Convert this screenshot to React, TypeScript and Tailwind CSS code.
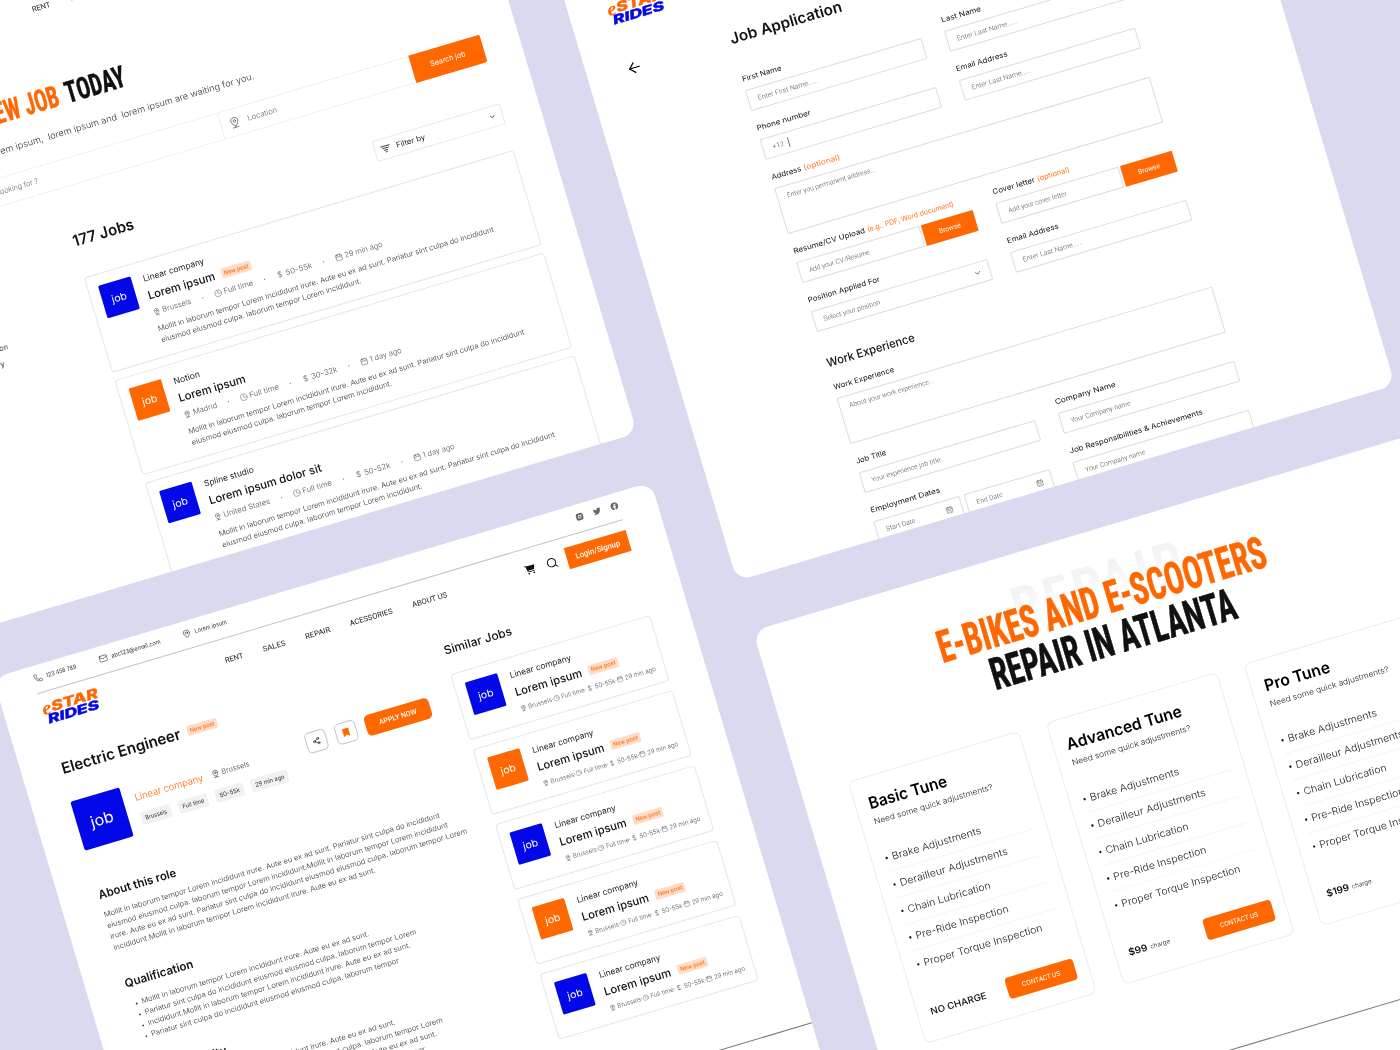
import React, { useLayoutEffect, useRef } from "react";
import { Phone, Mail, MapPin, Search, Share2, Clock, ChevronDown, ArrowLeft, CalendarDays, Calendar } from "lucide-react";
import { FaTwitter, FaFacebook, FaBookmark } from "react-icons/fa";
import { FaCartShopping } from "react-icons/fa6";
import { RiInstagramFill } from "react-icons/ri";

/** A single line of text stretched to an exact width. */
function Fit({ w, className = "", outer = "", children }: { w: number; className?: string; outer?: string; children: React.ReactNode }) {
  const ref = useRef<HTMLSpanElement>(null);
  useLayoutEffect(() => {
    const el = ref.current;
    if (!el) return;
    const natural = parseFloat(getComputedStyle(el).width);
    if (natural > 0) el.style.transform = `scaleX(${w / natural})`;
  }, [w]);
  return (
    <span className={`flex shrink-0 ${outer}`} style={{ width: w }}>
      <span ref={ref} className={`shrink-0 origin-left whitespace-pre ${className}`}>
        {children}
      </span>
    </span>
  );
}

function PinIcon({ className }: { className: string }) {
  return (
    <svg viewBox="0 0 24 24" fill="none" stroke="currentColor" strokeWidth="1.6" strokeLinecap="round" strokeLinejoin="round" className={className}>
      <path d="M12 20c-2.5-2-7-5.8-7-10.5a7 7 0 0 1 14 0C19 14.200 14.500 18 12 20z" />
      <circle cx="12" cy="9.500" r="2.600" />
      <path d="M6 22.500h12" />
    </svg>
  );
}

function FilterIcon({ className }: { className: string }) {
  return (
    <svg viewBox="0 0 24 24" fill="none" stroke="currentColor" strokeWidth="2" strokeLinecap="round" className={className}>
      <path d="M1.500 5.500h21M5 10.500h14M8 15.500h8M10.500 20h3" />
    </svg>
  );
}

function Logo() {
  return (
    <div className="w-[58px] shrink-0 font-['Inter'] font-extrabold italic">
      <div className="flex h-[11.500px] items-center text-[#ff6700]">
        <Fit w={9.500} className="font-['Liberation_Serif'] text-[19px] font-bold leading-[11px]">e</Fit>
        <Fit w={48.500} className="text-[13.800px] leading-[11.500px] [-webkit-text-stroke:0.350px_#ff6700]">STAR</Fit>
      </div>
      <div className="ml-[3px] mt-[0.300px] h-[11px] text-[#0308e8]">
        <Fit w={53} className="text-[12.600px] leading-[11px] [-webkit-text-stroke:0.400px_#0308e8]">RIDES</Fit>
      </div>
    </div>
  );
}

const NAV: [string, number][] = [
  ["RENT", 19],
  ["SALES", 23.5],
  ["REPAIR", 26],
  ["ACESSORIES", 44.5],
  ["ABOUT US", 36.5],
];

function Header() {
  return (
    <header className="px-[38px] text-[#333]">
      <div className="flex h-[28.300px] items-center border-b border-[#c4c4c4] pb-[2px] font-['Inter'] text-[6.200px]">
        <Phone className="ml-[0.800px] mr-[4px] size-[9px]" strokeWidth={1.5} />
        <Fit w={31}>123 456 789</Fit>
        <Mail className="ml-[24px] mr-[4px] size-[9px]" strokeWidth={1.5} />
        <Fit w={51}>abc123@email.com</Fit>
        <MapPin className="ml-[23px] mr-[4px] size-[9px]" strokeWidth={1.5} />
        <Fit w={33}>Lorem ipsum</Fit>
        <div className="ml-auto flex gap-[10px] text-[#666]">
          <RiInstagramFill className="size-[8.500px]" />
          <FaTwitter className="size-[8px]" />
          <FaFacebook className="size-[8px]" />
        </div>
      </div>
      <div className="mt-[10px] flex h-[22px] items-center">
        <Logo />
        <nav className="ml-[131.200px] flex gap-[20.600px] font-['Roboto'] text-[7.500px] text-[#222]">
          {NAV.map(([label, w]) => (
            <Fit key={label} w={w}>{label}</Fit>
          ))}
        </nav>
        <div className="ml-auto flex items-center text-[#111]">
          <FaCartShopping className="mr-[11.500px] size-[10.500px]" />
          <Search className="mr-[9px] size-[12.500px]" strokeWidth={2} />
          <div className="flex h-[21.800px] w-[64.500px] items-center justify-center bg-[#ff6700] font-['Roboto'] text-[8px] font-medium text-white">
            <Fit w={46}>Login/Signup</Fit>
          </div>
        </div>
      </div>
    </header>
  );
}

function Badge() {
  return (
    <div className="flex h-[10px] w-[31px] shrink-0 items-center justify-center rounded-[1.500px] bg-[#ffdcc8] font-['Roboto'] text-[6.200px] font-medium leading-none text-[#ff7a20]">
      <Fit w={25.500}>New post</Fit>
    </div>
  );
}

type Meta = { place: [string, number]; salary: [string, number]; time: [string, number]; type: [string, number] };

function MetaRow({ meta, compact }: { meta: Meta; compact?: boolean }) {
  const icon = compact ? "size-[6.500px] shrink-0" : "size-[7.800px] shrink-0";
  const dot = (
    <span className={compact ? "ml-[0.400px] mr-[0.600px] size-[0.900px] shrink-0 rounded-full bg-[#777]" : "mx-[11.500px] size-[1.200px] shrink-0 rounded-full bg-[#777]"} />
  );
  const gap = compact ? "flex items-center gap-[1.700px]" : "flex items-center gap-[2px]";
  return (
    <div className={`flex h-[10px] items-center font-['Inter'] font-light text-[#555] ${compact ? "text-[6.500px]" : "text-[7.600px]"}`}>
      <div className={gap}><PinIcon className={icon} /><Fit w={meta.place[1]}>{meta.place[0]}</Fit></div>
      {dot}
      <div className={gap}><Clock className={icon} strokeWidth={1.5} /><Fit w={meta.type[1]}>{meta.type[0]}</Fit></div>
      {dot}
      <div className={gap}><span className={compact ? "w-[7.500px] text-center" : "w-[7.800px] text-center"}>$</span><Fit w={meta.salary[1]}>{meta.salary[0]}</Fit></div>
      {dot}
      <div className={gap}><Calendar className={icon} strokeWidth={1.500} /><Fit w={meta.time[1]}>{meta.time[0]}</Fit></div>
    </div>
  );
}

function JobTile({ orange }: { orange?: boolean }) {
  return (
    <div className={`flex size-[33.800px] shrink-0 items-center justify-center rounded-[1.500px] font-['Inter'] text-[10.200px] text-white ${orange ? "bg-[#ff6700]" : "bg-[#0308e8]"}`}>
      <Fit w={15.500}>job</Fit>
    </div>
  );
}

function JobHead({ company, title, badge }: { company: [string, number]; title: [string, number]; badge?: boolean }) {
  return (
    <>
      <div className="h-[12px] font-['Inter'] text-[8.500px] leading-[12px] text-[#222]">
        <Fit w={company[1]}>{company[0]}</Fit>
      </div>
      <div className="mt-[4.600px] flex h-[14px] items-center gap-[7px] font-['Inter'] text-[11.400px] font-medium leading-[14px] text-[#111]">
        <Fit w={title[1]}>{title[0]}</Fit>
        {badge && <Badge />}
      </div>
    </>
  );
}

const JOBS: { company: [string, number]; title: [string, number]; badge?: boolean; orange?: boolean; meta: Meta }[] = [
  {
    company: ["Linear company", 63.5], title: ["Lorem ipsum", 69.5], badge: true,
    meta: { place: ["Brussels", 30], type: ["Full time", 30.5], salary: ["50-55k", 27.5], time: ["29 min ago", 39.5] },
  },
  {
    company: ["Notion", 27], title: ["Lorem ipsum", 69.5], orange: true,
    meta: { place: ["Madrid", 25], type: ["Full time", 30.5], salary: ["30-32k", 27], time: ["1 day ago", 33] },
  },
  {
    company: ["Spline studio", 51.5], title: ["Lorem ipsum dolor sit", 117],
    meta: { place: ["United States", 48.5], type: ["Full time", 30.5], salary: ["50-52k", 27], time: ["1 day ago", 33] },
  },
];

function JobList() {
  return (
    <>
      <div className="mt-[64px] flex h-[30px] w-[297px] items-center justify-end font-['Roboto'] text-[30px] font-bold leading-[30px] text-[#111] [-webkit-text-stroke-width:0.400px] [font-stretch:75%]">
        <Fit w={100}>FIND YOUR</Fit>
        <Fit w={79.500} outer="ml-[5px]" className="text-[#ff6700]">NEW JOB</Fit>
        <Fit w={61.500} outer="ml-[7.500px]">TODAY</Fit>
      </div>
      <div className="mt-[14.700px] flex h-[14px] w-[421px] items-center justify-end font-['Inter'] text-[9px] font-light leading-[14px] text-[#333]">
        <span className="whitespace-pre">Thousands of jobs, lor</span>
        <Fit w={264.500}>{"em ipsum,  lorem ipsum and  lorem ipsum are waiting for you."}</Fit>
      </div>
      <div className="ml-[38px] mt-[18px] flex h-[28.600px] w-[611px] items-stretch rounded-[2px] border border-r-0 border-[#ececec] font-['Inter'] text-[7.600px] font-light text-[#666]">
        <div className="flex w-[337px] items-center border-r border-[#ececec]">
          <span className="w-[105.800px] whitespace-pre text-right">What are you l</span>
          <Fit w={39.500}>ooking for ?</Fit>
        </div>
        <div className="flex items-center">
          <PinIcon className="ml-[7.500px] mr-[7.500px] size-[12px]" />
          <Fit w={30.500}>Location</Fit>
        </div>
        <div className="-my-px ml-auto flex w-[74.300px] items-center justify-center rounded-r-[2px] bg-[#ff6700] font-normal text-white">
          <Fit w={36.500}>Search job</Fit>
        </div>
      </div>
      <div className="mt-[43px] flex">
        <aside className="w-[200.500px] shrink-0 pl-[38px] pt-[85px] font-['Inter'] text-[7.600px] leading-[15.500px] text-[#333]">
          <div className="w-[70px] text-right">Location</div>
          <div className="w-[62px] text-right">Salary</div>
        </aside>
        <main className="w-[448.200px]">
          <div className="flex h-[21.600px] items-center justify-between">
            <Fit w={63} className="font-['Inter'] text-[15.500px] font-semibold text-[#111]">177 Jobs</Fit>
            <div className="flex h-[21.600px] w-[133.500px] items-center rounded-[2px] border border-[#e9e9e9] text-[#222]">
              <FilterIcon className="ml-[5.500px] size-[10px]" />
              <Fit w={30} outer="ml-[6px]" className="font-['Inter'] text-[7.600px]">Filter by</Fit>
              <ChevronDown className="ml-auto mr-[5.500px] size-[8px]" strokeWidth={1.800} />
            </div>
          </div>
          <div className="mt-[27px] flex flex-col gap-[7.800px]">
            {JOBS.map((job, i) => (
              <article key={i} className="flex h-[99.200px] rounded-[4px] border border-[#e6e6e6] pl-[10.300px] pt-[11px]">
                <JobTile orange={job.orange} />
                <div className="ml-[11.400px]">
                  <JobHead company={job.company} title={job.title} badge={job.badge} />
                  <div className="mt-[5.500px]"><MetaRow meta={job.meta} /></div>
                  <div className="mt-[6.300px] font-['Inter'] text-[7.400px] font-light leading-[11.500px] text-[#333]">
                    <Fit w={350}>Mollit in laborum tempor Lorem incididunt irure. Aute eu ex ad sunt. Pariatur sint culpa do incididunt</Fit>
                    <Fit w={208.500}>eiusmod eiusmod culpa. laborum tempor Lorem incididunt.</Fit>
                  </div>
                </div>
              </article>
            ))}
          </div>
        </main>
      </div>
    </>
  );
}

function Label({ text, w, note, noteW = 0 }: { text: string; w: number; note?: string; noteW?: number }) {
  return (
    <div className="flex h-[10px] items-center gap-[2.500px] pl-[0.500px] font-['Inter'] text-[7.400px] leading-[10px] text-[#111]">
      <Fit w={w}>{text}</Fit>
      {note && <Fit w={noteW} className="text-[#ff7a20]">{note}</Fit>}
    </div>
  );
}

const box = "flex rounded-[1.500px] border border-[#dcdcdc] pl-[9.200px] font-['Roboto'] text-[6.900px] font-light text-[#555]";

function Field(p: { label: string; w: number; note?: string; noteW?: number; hint: string; hintW: number; browse?: boolean; chevron?: boolean; caret?: boolean }) {
  return (
    <div>
      <Label text={p.label} w={p.w} note={p.note} noteW={p.noteW} />
      <div className="mt-[6.600px] flex h-[21.600px] gap-[1.800px]">
        <div className={`${box} flex-1 items-center`}>
          <Fit w={p.hintW}>{p.hint}</Fit>
          {p.caret && <span className="ml-[4.500px] h-[10px] w-[0.700px] bg-[#555]" />}
          {p.chevron && <ChevronDown className="ml-auto mr-[7.500px] size-[9px]" strokeWidth={1.700} />}
        </div>
        {p.browse && (
          <div className="flex w-[54px] items-center justify-center rounded-[1px] bg-[#ff6700] font-['Roboto'] text-[6.900px] text-white">
            <Fit w={22.500}>Browse</Fit>
          </div>
        )}
      </div>
    </div>
  );
}

function Area(p: { label: string; w: number; note?: string; noteW?: number; hint: string; hintW: number }) {
  return (
    <div className="col-span-2">
      <Label text={p.label} w={p.w} note={p.note} noteW={p.noteW} />
      <div className={`${box} mt-[6.600px] h-[47.800px] pt-[4.500px] leading-[10px]`}>
        <Fit w={p.hintW}>{p.hint}</Fit>
      </div>
    </div>
  );
}

function DateBox({ hint, w }: { hint: string; w: number }) {
  return (
    <div className={`${box} w-[89.700px] items-center`}>
      <Fit w={w}>{hint}</Fit>
      <CalendarDays className="ml-auto mr-[8.500px] size-[7.500px]" strokeWidth={1.500} />
    </div>
  );
}

function Application() {
  return (
    <>
      <div className="mt-[37.500px] flex h-[18px] items-center">
        <ArrowLeft className="ml-[39.500px] size-[17px] text-black" strokeWidth={1.700} />
        <Fit w={116} outer="ml-[91.500px]" className="font-['Inter'] text-[15.300px] font-semibold text-[#111]">Job Application</Fit>
      </div>
      <form className="ml-[147.500px] mt-[27.700px] w-[391.700px]">
        <div className="grid grid-cols-2 gap-x-[23.700px] gap-y-[12.900px]">
          <Field label="First Name" w={40.5} hint="Enter First Name......" hintW={62} />
          <Field label="Last Name" w={41} hint="Enter Last Name......" hintW={62} />
          <Field label="Phone number" w={56} hint="+12" hintW={12} caret />
          <Field label="Email Address" w={53.5} hint="Enter Last Name......" hintW={62} />
          <Area label="Address" w={31} note="(optional)" noteW={38} hint="Enter you permanent address..." hintW={91.5} />
          <Field label="Resume/CV Upload" w={74.5} note="(e.g., PDF, Word document)" noteW={90} hint="Add your CV/Resume" hintW={63} browse />
          <Field label="Cover letter" w={44} note="(optional)" noteW={33.7} hint="Add your cover letter" hintW={61} browse />
          <Field label="Position Applied For" w={74.8} hint="Select your position" hintW={58.8} chevron />
          <Field label="Email Address" w={53.5} hint="Enter Last Name......" hintW={62} />
        </div>
        <div className="mt-[24.500px] h-[16px] pl-[0.500px] font-['Inter'] text-[11.800px] font-medium leading-[16px] text-[#111]">
          <Fit w={91.500}>Work Experience</Fit>
        </div>
        <div className="mt-[12px] grid grid-cols-2 gap-x-[23.700px] gap-y-[12.900px]">
          <Area label="Work Experience" w={62.600} hint="About your work experience..." hintW={87.600} />
          <Field label="Job Title" w={31.300} hint="Your experience job title.." hintW={74.800} />
          <Field label="Company Name" w={63} hint="Your Company name" hintW={62.300} />
          <div>
            <Label text="Employment Dates" w={72.300} />
            <div className="mt-[6.600px] flex h-[21.600px] justify-between">
              <DateBox hint="Start Date" w={30} />
              <DateBox hint="End Date" w={27} />
            </div>
          </div>
          <Field label="Job Responsibilities & Achievements" w={138.500} hint="Your Company name" hintW={62.300} />
        </div>
      </form>
    </>
  );
}

const SERVICES: [string, number][] = [
  ["Brake Adjustments", 92.5],
  ["Derailleur Adjustments", 112],
  ["Chain Lubrication", 86],
  ["Pre-Ride Inspection", 96.400],
  ["Proper Torque Inspection", 123.500],
];

const PLANS: { name: [string, number]; price: [string, number]; charge?: boolean }[] = [
  { name: ["Basic Tune", 81], price: ["NO CHARGE", 58] },
  { name: ["Advanced Tune", 119.700], price: ["$99", 19.500], charge: true },
  { name: ["Pro Tune", 67.600], price: ["$199", 23.400], charge: true },
];

function Repair() {
  return (
    <div className="flex h-full flex-col">
      <div className="relative mt-[49px] font-['Roboto'] font-bold [font-stretch:75%]">
        <div className="absolute left-[255px] top-[-20px] text-[60px] leading-[52px] tracking-[5px]">
          <Fit w={181} className="bg-linear-to-b from-[#f3f3f3] from-20% to-white to-75% bg-clip-text text-transparent">REPAIR</Fit>
        </div>
        <div className="relative text-[44.600px] leading-[41.300px] [-webkit-text-stroke-width:0.600px]">
          <div className="pl-[172.500px] text-[#ff6700]"><Fit w={341}>E-BIKES AND E-SCOOTERS</Fit></div>
          <div className="pl-[215.500px] text-[#111]"><Fit w={254.500}>REPAIR IN ATLANTA</Fit></div>
        </div>
      </div>
      <div className="ml-[47.700px] mt-[39.800px] flex gap-[27.800px]">
        {PLANS.map((plan) => (
          <section key={plan.name[0]} className="flex h-[273.500px] w-[178.700px] shrink-0 flex-col rounded-[7px] border border-[#ececec] px-[13px] pt-[16px] font-['Inter']">
            <div className="h-[20px] text-[16.300px] font-semibold leading-[20px] text-black">
              <Fit w={plan.name[1]}>{plan.name[0]}</Fit>
            </div>
            <div className="mt-[3px] h-[12px] text-[8px] font-light leading-[12px] text-[#222]">
              <Fit w={123.500}>Need some quick adjustments?</Fit>
            </div>
            <ul className="mt-[19px]">
              {SERVICES.map(([name, w], i) => (
                <li key={name} className={`flex h-[27.600px] items-center text-[10px] font-light text-[#222] ${i < SERVICES.length - 1 ? "border-b border-[#f5f5f5]" : ""}`}>
                  <span className="ml-[0.500px] mr-[4.400px] size-[2.400px] rounded-full bg-[#111]" />
                  <Fit w={w}>{name}</Fit>
                </li>
              ))}
            </ul>
            <div className="mt-[24px] flex h-[22px] items-center text-[#111]">
              <Fit w={plan.price[1]} className={plan.charge ? "text-[9.600px] font-semibold" : "text-[9.200px] font-medium"}>{plan.price[0]}</Fit>
              {plan.charge && <Fit w={20.500} outer="ml-[3px] pt-px" className="text-[6.300px] font-light">charge</Fit>}
              <div className="ml-auto flex h-[22px] w-[71px] items-center justify-center rounded-[4px] bg-[#ff6700] font-['Roboto'] text-[6.900px] text-white">
                <Fit w={39.500}>CONTACT US</Fit>
              </div>
            </div>
          </section>
        ))}
      </div>
      <footer className="mt-[92.300px] border-t border-[#777]" />
    </div>
  );
}

const ROLE_LINES: [string, number][] = [
  ["Mollit in laborum tempor Lorem incididunt irure. Aute eu ex ad sunt. Pariatur sint culpa do incididunt", 350],
  ["eiusmod eiusmod culpa. laborum tempor Lorem incididunt.Mollit in laborum tempor Lorem incididunt", 355],
  ["irure. Aute eu ex ad sunt. Pariatur sint culpa do incididunt eiusmod eiusmod culpa. laborum tempor Lorem", 372],
  ["incididunt.Mollit in laborum tempor Lorem incididunt irure. Aute eu ex ad sunt.", 273],
];

const BULLETS: [string, number][] = [
  ["Mollit in laborum tempor Lorem incididunt irure. Aute eu ex ad sunt.", 237],
  ["Pariatur sint culpa do incididunt eiusmod eiusmod culpa. laborum tempor Lorem", 283],
  ["incididunt.Mollit in laborum tempor Lorem incididunt irure. Aute eu ex ad sunt.", 273.500],
  ["Pariatur sint culpa do incididunt eiusmod eiusmod culpa. laborum tempor", 258],
];

const SIMILAR: Meta = { place: ["Brussels", 24.500], type: ["Full time", 24], salary: ["50-55k", 21], time: ["29 min ago", 32] };

const CHIPS: [string, number][] = [["Brussels", 22.500], ["Full time", 22.500], ["50-55k", 21], ["29 min ago", 30]];

function BulletList() {
  return (
    <ul className="mt-[7.700px]">
      {BULLETS.map(([line, w], i) => (
        <li key={i} className="flex items-center">
          <span className="ml-[5.300px] mr-[4.500px] mt-[2px] size-[1.800px] shrink-0 rounded-full bg-[#333]" />
          <Fit w={w}>{line}</Fit>
        </li>
      ))}
    </ul>
  );
}

function JobDetail() {
  return (
    <div className="flex flex-1 flex-col">
      <div className="flex">
        <div className="ml-[38.700px] w-[372px] font-['Inter'] text-[7.400px] font-light leading-[11.400px] text-[#333]">
          <div className="ml-[1.300px] mt-[36.300px] flex h-[20px] items-center gap-[7.500px]">
            <Fit w={123.500} className="text-[15.300px] font-semibold leading-[20px] text-[#111]">Electric Engineer</Fit>
            <Badge />
          </div>
          <div className="mt-[24.100px] flex h-[51px]">
            <div className="flex size-[51px] shrink-0 items-center justify-center rounded-[2px] bg-[#0308e8] text-[15.500px] font-normal text-white">
              <Fit w={23.500}>job</Fit>
            </div>
            <div className="ml-[12px] pt-[8.300px]">
              <div className="flex h-[12px] items-center">
                <Fit w={71} className="text-[9.700px] leading-[12px] text-[#ff6700]">Linear company</Fit>
                <PinIcon className="ml-[9px] mr-[2px] size-[8.500px]" />
                <Fit w={29} className="text-[7.400px] text-[#444]">Brussels</Fit>
              </div>
              <div className="ml-[0.500px] mt-[9.700px] flex gap-[8px]">
                {CHIPS.map(([label, w]) => (
                  <div key={label} className="flex h-[13.400px] items-center rounded-[2.500px] bg-[#f1f1f1] px-[4.100px] text-[6.200px] font-normal text-[#333]">
                    <Fit w={w}>{label}</Fit>
                  </div>
                ))}
              </div>
            </div>
            <div className="ml-auto mt-[1.300px] flex h-[21.600px] gap-[9.500px] text-[#222]">
              <div className="flex w-[21.600px] items-center justify-center rounded-[5px] border border-[#c4c4c4]">
                <Share2 className="size-[8px]" strokeWidth={2} />
              </div>
              <div className="flex w-[21.600px] items-center justify-center rounded-[5px] border border-[#c4c4c4]">
                <FaBookmark className="size-[8.500px] text-[#ff6700]" />
              </div>
              <div className="flex w-[67.300px] items-center justify-center rounded-[5px] bg-[#ff6700] font-['Roboto'] text-[7.200px] font-medium text-white">
                <Fit w={39}>APPLY NOW</Fit>
              </div>
            </div>
          </div>
          <h2 className="mt-[38.500px] h-[16px] pl-[0.500px] text-[11.800px] font-semibold leading-[16px] text-[#111]"><Fit w={80.500}>About this role</Fit></h2>
          <div className="mt-[6.800px]">
            {ROLE_LINES.map(([line, w], i) => (
              <Fit key={i} w={w}>{line}</Fit>
            ))}
          </div>
          <h2 className="mt-[24px] h-[16px] pl-[0.500px] text-[11.800px] font-semibold leading-[16px] text-[#111]"><Fit w={71}>Qualification</Fit></h2>
          <BulletList />
          <h2 className="mt-[23px] h-[16px] text-[11.800px] font-semibold leading-[16px] text-[#111]"><Fit w={79}>Responsibility</Fit></h2>
          <BulletList />
        </div>
        <div className="ml-[28.600px] mt-[34.200px]">
          <h2 className="h-[16px] pl-[0.700px] font-['Inter'] text-[11.800px] font-medium leading-[16px] text-[#111]"><Fit w={70.500}>Similar Jobs</Fit></h2>
          <div className="mt-[16.600px] flex flex-col gap-[9.600px]">
            {[0, 1, 2, 3, 4].map((i) => (
              <article key={i} className="flex h-[68.550px] w-[208.500px] rounded-[4px] border border-[#e6e6e6] pl-[10.500px] pt-[11px]">
                <JobTile orange={i % 2 === 1} />
                <div className="ml-[11.600px]">
                  <JobHead company={["Linear company", 63.5]} title={["Lorem ipsum", 69.5]} badge />
                  <div className="mt-[5.200px] pl-[0.500px]"><MetaRow meta={SIMILAR} compact /></div>
                </div>
              </article>
            ))}
          </div>
        </div>
      </div>
      <footer className="mt-auto h-[64.600px] border-t border-[#777]" />
    </div>
  );
}

/** A tilted page; laid out at four times its size and scaled back so fractional sizes stay exact. */
function Page({ className, children }: { className: string; children: React.ReactNode }) {
  return (
    <div className={`absolute origin-top-left -rotate-[16.570deg] scale-25 ${className}`}>
      <div className="flex h-[628px] w-[686.500px] flex-col overflow-hidden rounded-[14.500px] bg-white [zoom:4] *:shrink-0">
        {children}
      </div>
    </div>
  );
}

export default function App() {
  return (
    <div className="relative h-[1050px] w-[1400px] overflow-hidden bg-[#d9daef]">
      <Page className="left-[-200.100px] top-[27.200px]">
        <Header />
        <JobList />
      </Page>
      <Page className="left-[558.200px] top-[-21.100px]">
        <Header />
        <Application />
      </Page>
      <Page className="left-[-6.900px] top-[678.200px]">
        <Header />
        <JobDetail />
      </Page>
      <Page className="left-[753.200px] top-[631.400px]">
        <Repair />
      </Page>
    </div>
  );
}
